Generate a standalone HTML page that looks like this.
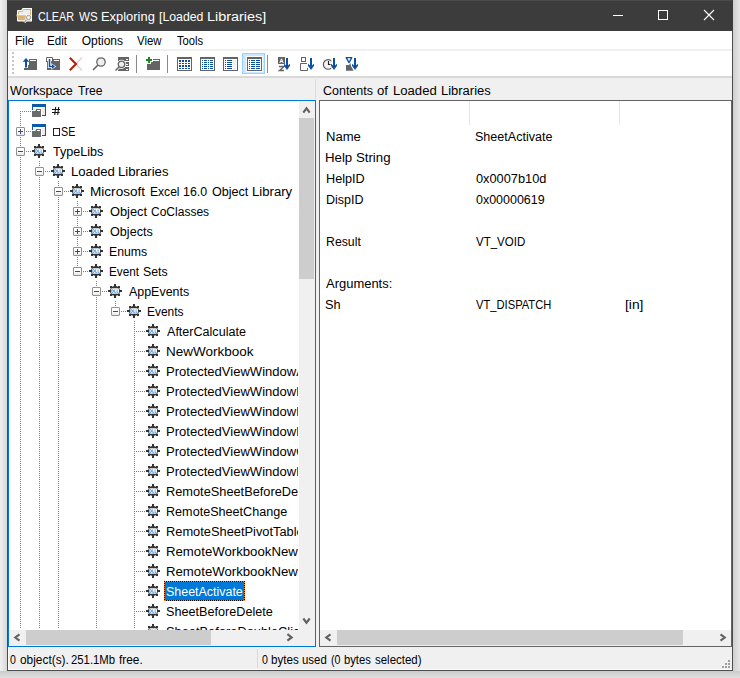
<!DOCTYPE html>
<html><head><meta charset="utf-8"><style>
html,body{margin:0;padding:0;}
body{width:740px;height:678px;overflow:hidden;position:relative;background:#ececec;font-family:"Liberation Sans", sans-serif;}
.r{position:absolute;}
.t{position:absolute;white-space:nowrap;font-size:12px;line-height:20px;transform-origin:0 0;}
.shadowL{position:absolute;left:0;top:0;width:7px;height:678px;background:linear-gradient(to right,#f1f1f1,#d8d8d8);}
.shadowR{position:absolute;left:733px;top:0;width:7px;height:678px;background:linear-gradient(to right,#cfcfcf,#e6e6e6);}
.shadowB{position:absolute;left:0;top:671px;width:740px;height:7px;background:linear-gradient(to bottom,#cbcbcb,#e0e0e0);}
</style></head><body>
<div class="shadowL"></div><div class="shadowR"></div><div class="shadowB"></div>
<svg width="0" height="0" style="position:absolute">
<defs>
<symbol id="gear" viewBox="0 0 16 16">
 <g fill="#333">
  <circle cx="8" cy="8" r="5"/>
  <rect x="7" y="1" width="2" height="3"/><rect x="7" y="12" width="2" height="3"/>
  <rect x="1" y="7" width="3" height="2"/><rect x="12" y="7" width="3" height="2"/>
  <rect x="3" y="3" width="2.2" height="2.2"/><rect x="10.8" y="3" width="2.2" height="2.2"/>
  <rect x="3" y="10.8" width="2.2" height="2.2"/><rect x="10.8" y="10.8" width="2.2" height="2.2"/>
 </g>
 <rect x="4" y="5.2" width="8" height="5.6" rx="1.4" fill="#fff"/>
 <path d="M4.8 6.4 V9.7 M4.8 6.4 Q6.7 6.7 6.7 8.05 Q6.7 9.4 4.8 9.7 M7.7 6.4 V9.7 H9.2 M10.1 6.4 V9.7 H11.6" stroke="#5a9ad8" stroke-width="0.9" fill="none"/>
</symbol>
<symbol id="win" viewBox="0 0 16 16">
 <rect x="1" y="1" width="14" height="12" fill="#0b5aa8"/>
 <rect x="2" y="4" width="12" height="8" fill="#ececec"/>
 <rect x="2" y="4" width="12" height="1" fill="#fff"/>
 <path d="M0 7 H4 V5 H11 V15 H0 Z" fill="#fff"/>
 <path d="M1 8 H4.5 L5 6 H10 V14 H1 Z" fill="#6b6b6b"/>
 <rect x="6" y="7" width="3" height="1" fill="#fff"/>
</symbol>
</defs></svg>
<div class="r" style="left:7px;top:0px;width:726px;height:31px;background:#3c3c3c;"></div><div class="r" style="left:8px;top:0px;width:724px;height:1px;background:#4a4a4a;"></div><svg class="r" style="left:16px;top:8px" width="16" height="16" viewBox="0 0 16 16">
<path d="M2 12.5 V3 H6 L7 1 H15.5 V12.5 Z" fill="#fff" stroke="#fff" stroke-width="2" stroke-linejoin="round"/>
<path d="M2.5 12 V3.5 H6.3 L7.3 1.5 H14.5 V12 Z" fill="#ececf2" stroke="#d9b46f" stroke-width="1"/>
<path d="M0.5 6.5 H10.5 V12.5 H1.5 Z" fill="#fff"/>
<path d="M1.3 7.3 H10 V12 H2.2 Z" fill="#dab370"/>
<path d="M11 11 L8.3 14.2" stroke="#fff" stroke-width="2.6"/>
<path d="M11 11 L8.5 14" stroke="#9a9a9a" stroke-width="1.2"/>
<circle cx="12.6" cy="9.5" r="3" fill="#fff"/>
<circle cx="12.6" cy="9.5" r="2.1" fill="#f4f4f4" stroke="#8a8a8a" stroke-width="0.9"/>
</svg><div class="t" style="left:37.60px;top:7px;transform:scaleX(0.9000);color:#fff">CLEAR</div><div class="t" style="left:78.50px;top:7px;transform:scaleX(0.9632);color:#fff">WS</div><div class="t" style="left:100.62px;top:7px;transform:scaleX(1.0755);color:#fff">Exploring</div><div class="t" style="left:159.48px;top:7px;transform:scaleX(1.0238);color:#fff">[Loaded</div><div class="t" style="left:207.20px;top:7px;transform:scaleX(1.2000);color:#fff">Libraries]</div><div class="r" style="left:613px;top:15px;width:10px;height:1px;background:#fff;"></div><div class="r" style="left:658px;top:10px;width:10px;height:10px;background:transparent;border:1px solid #fff;box-sizing:border-box;width:10px;height:10px"></div><svg class="r" style="left:703px;top:9px" width="13" height="13" viewBox="0 0 13 13"><path d="M1 1 L11 11 M11 1 L1 11" stroke="#fff" stroke-width="1.1"/></svg><div class="r" style="left:8px;top:31px;width:724px;height:639px;background:#f0f0f0;"></div><div class="r" style="left:7px;top:31px;width:1px;height:640px;background:#4d4d4d;"></div><div class="r" style="left:732px;top:31px;width:1px;height:640px;background:#4d4d4d;"></div><div class="r" style="left:7px;top:670px;width:726px;height:1px;background:#4d4d4d;"></div><div class="r" style="left:8px;top:31px;width:724px;height:18px;background:#fff;"></div><div class="r" style="left:8px;top:49px;width:724px;height:2px;background:#f0f0f0;"></div><div class="t" style="left:14.51px;top:31px;transform:scaleX(0.9889);color:#000;">File</div><div class="t" style="left:46.63px;top:31px;transform:scaleX(0.9650);color:#000;">Edit</div><div class="t" style="left:81.70px;top:31px;transform:scaleX(1.0000);color:#000;">Options</div><div class="t" style="left:137.30px;top:31px;transform:scaleX(0.9500);color:#000;">View</div><div class="t" style="left:176.90px;top:31px;transform:scaleX(0.9321);color:#000;">Tools</div><div class="r" style="left:8px;top:51px;width:724px;height:25px;background:#fff;"></div><div class="r" style="left:8px;top:76px;width:724px;height:2px;background:#d9d9d9;"></div><div class="r" style="left:12px;top:52px;width:2px;height:2px;background:#c6c6c6;"></div><div class="r" style="left:12px;top:56px;width:2px;height:2px;background:#c6c6c6;"></div><div class="r" style="left:12px;top:60px;width:2px;height:2px;background:#c6c6c6;"></div><div class="r" style="left:12px;top:64px;width:2px;height:2px;background:#c6c6c6;"></div><div class="r" style="left:12px;top:68px;width:2px;height:2px;background:#c6c6c6;"></div><div class="r" style="left:12px;top:72px;width:2px;height:2px;background:#c6c6c6;"></div><div class="r" style="left:136px;top:55px;width:1px;height:18px;background:#8a8a8a;"></div><div class="r" style="left:167px;top:55px;width:1px;height:18px;background:#8a8a8a;"></div><div class="r" style="left:267px;top:55px;width:1px;height:18px;background:#8a8a8a;"></div><div class="r" style="left:242px;top:53px;width:23px;height:21px;background:#cce8ff;border:1px solid #99d1ff;box-sizing:border-box"></div>
<svg class="r" style="left:0;top:0" width="740" height="80" viewBox="0 0 740 80">
<!-- icon1 up folder -->
<path d="M29 59 H37 V70 H24 V68 H28 V65 H29 Z" fill="#646464"/>
<rect x="30" y="60" width="6" height="1" fill="#fff"/>
<path d="M25 58 V67.5 H27 V61.8 H29.3 L26 58 L22.7 61.8 H25" fill="#0b50a5"/>
<!-- icon2 link folder -->
<path d="M53 59 H60 V70 H47 V62 H53 Z" fill="#646464"/>
<rect x="54" y="60" width="5" height="1" fill="#fff"/>
<rect x="46" y="57" width="7" height="5" fill="#fff"/>
<path d="M46.5 62 V57.5 H52.5 V62" stroke="#646464" stroke-width="1" fill="none"/>
<path d="M46 61.5 H48 M51 61.5 H53" stroke="#646464" stroke-width="1"/>
<path d="M49.5 59 V66.5 H53.5" stroke="#fff" stroke-width="3.2" fill="none"/>
<path d="M51.3 63.2 L56.2 66.5 L51.3 69.8 Z" fill="#fff"/>
<path d="M49.5 59 V66.5 H52.5" stroke="#0b50a5" stroke-width="1.5" fill="none"/>
<path d="M52 64.3 L55 66.5 L52 68.7 Z" fill="#0b50a5"/>
<!-- red X -->
<path d="M76 64 L82 57.5 M76 64 L82 70.5" stroke="#f2cfc9" stroke-width="1.4"/>
<path d="M69.8 57.8 L76 64 L69.8 70.2" stroke="#b01e08" stroke-width="2" fill="none"/>
<!-- magnifier -->
<circle cx="101" cy="62" r="4.2" fill="#eeeeee" stroke="#646464" stroke-width="1.3"/>
<path d="M98 65 L93 70" stroke="#646464" stroke-width="1.6"/>
<!-- server magnifier -->
<rect x="118" y="57" width="11" height="4" fill="#646464"/>
<rect x="118" y="62" width="11" height="4" fill="#646464"/>
<rect x="118" y="67" width="11" height="4" fill="#646464"/>
<path d="M126 59.5 H128 M126 64.5 H128 M126 69.5 H128" stroke="#fff" stroke-width="1"/>
<circle cx="121.5" cy="64.3" r="4.6" fill="#fff"/>
<path d="M119 67 L115.5 70.5" stroke="#fff" stroke-width="3"/>
<circle cx="121.5" cy="64.3" r="3.2" fill="#eeeeee" stroke="#646464" stroke-width="1.3"/>
<path d="M119.2 66.8 L115.5 70.5" stroke="#646464" stroke-width="1.5"/>
<!-- new folder -->
<path d="M147 64 H151 V62 H153 V59 H160 V70 H147 Z" fill="#646464"/>
<rect x="153" y="60" width="6" height="1" fill="#fff"/>
<path d="M149 56 V64 M145 60 H153" stroke="#fff" stroke-width="3.2"/>
<path d="M149 57 V63 M146 60 H152" stroke="#1a861a" stroke-width="2"/>
<!-- checked white inner -->
<rect x="246" y="56" width="17" height="16" fill="#fff"/>
<rect x="177.5" y="57.5" width="14" height="13" fill="#fff" stroke="#646464" stroke-width="1"/><rect x="177" y="57" width="15" height="2" fill="#646464"/><rect x="179" y="60" width="2" height="2" fill="#0a50a0"/><rect x="179" y="63" width="2" height="1" fill="#0a50a0"/><rect x="179" y="65" width="2" height="2" fill="#0a50a0"/><rect x="179" y="68" width="2" height="1" fill="#0a50a0"/><rect x="182" y="60" width="2" height="2" fill="#0a50a0"/><rect x="182" y="63" width="2" height="1" fill="#0a50a0"/><rect x="182" y="65" width="2" height="2" fill="#0a50a0"/><rect x="182" y="68" width="2" height="1" fill="#0a50a0"/><rect x="185" y="60" width="2" height="2" fill="#0a50a0"/><rect x="185" y="63" width="2" height="1" fill="#0a50a0"/><rect x="185" y="65" width="2" height="2" fill="#0a50a0"/><rect x="185" y="68" width="2" height="1" fill="#0a50a0"/><rect x="188" y="60" width="2" height="2" fill="#0a50a0"/><rect x="188" y="63" width="2" height="1" fill="#0a50a0"/><rect x="188" y="65" width="2" height="2" fill="#0a50a0"/><rect x="188" y="68" width="2" height="1" fill="#0a50a0"/><rect x="200.5" y="57.5" width="14" height="13" fill="#fff" stroke="#646464" stroke-width="1"/><rect x="200" y="57" width="15" height="2" fill="#646464"/><rect x="202" y="60" width="1" height="1" fill="#0a50a0"/><rect x="204" y="60" width="3" height="1" fill="#0a50a0"/><rect x="208" y="60" width="1" height="1" fill="#0a50a0"/><rect x="210" y="60" width="3" height="1" fill="#0a50a0"/><rect x="202" y="62" width="1" height="1" fill="#0a50a0"/><rect x="204" y="62" width="3" height="1" fill="#0a50a0"/><rect x="208" y="62" width="1" height="1" fill="#0a50a0"/><rect x="210" y="62" width="3" height="1" fill="#0a50a0"/><rect x="202" y="64" width="1" height="1" fill="#0a50a0"/><rect x="204" y="64" width="3" height="1" fill="#0a50a0"/><rect x="208" y="64" width="1" height="1" fill="#0a50a0"/><rect x="210" y="64" width="3" height="1" fill="#0a50a0"/><rect x="202" y="66" width="1" height="1" fill="#0a50a0"/><rect x="204" y="66" width="3" height="1" fill="#0a50a0"/><rect x="208" y="66" width="1" height="1" fill="#0a50a0"/><rect x="210" y="66" width="3" height="1" fill="#0a50a0"/><rect x="202" y="68" width="1" height="1" fill="#0a50a0"/><rect x="204" y="68" width="3" height="1" fill="#0a50a0"/><rect x="208" y="68" width="1" height="1" fill="#0a50a0"/><rect x="210" y="68" width="3" height="1" fill="#0a50a0"/><rect x="223.5" y="57.5" width="14" height="13" fill="#fff" stroke="#646464" stroke-width="1"/><rect x="223" y="57" width="15" height="2" fill="#646464"/><rect x="233" y="60" width="3" height="10" fill="#f2f2f2"/><rect x="225" y="60" width="1" height="1" fill="#0a50a0"/><rect x="227" y="60" width="5" height="1" fill="#0a50a0"/><rect x="225" y="62" width="1" height="1" fill="#0a50a0"/><rect x="227" y="62" width="5" height="1" fill="#0a50a0"/><rect x="225" y="64" width="1" height="1" fill="#0a50a0"/><rect x="227" y="64" width="5" height="1" fill="#0a50a0"/><rect x="225" y="66" width="1" height="1" fill="#0a50a0"/><rect x="227" y="66" width="5" height="1" fill="#0a50a0"/><rect x="225" y="68" width="1" height="1" fill="#0a50a0"/><rect x="227" y="68" width="5" height="1" fill="#0a50a0"/><rect x="247.5" y="57.5" width="14" height="13" fill="#fff" stroke="#646464" stroke-width="1"/><rect x="247" y="57" width="15" height="2" fill="#646464"/><rect x="249" y="60" width="1" height="1" fill="#0a50a0"/><rect x="251" y="60" width="4" height="1" fill="#0a50a0"/><rect x="256" y="60" width="4" height="1" fill="#0a50a0"/><rect x="249" y="62" width="1" height="1" fill="#0a50a0"/><rect x="251" y="62" width="4" height="1" fill="#0a50a0"/><rect x="256" y="62" width="4" height="1" fill="#0a50a0"/><rect x="249" y="64" width="1" height="1" fill="#0a50a0"/><rect x="251" y="64" width="4" height="1" fill="#0a50a0"/><rect x="256" y="64" width="4" height="1" fill="#0a50a0"/><rect x="249" y="66" width="1" height="1" fill="#0a50a0"/><rect x="251" y="66" width="4" height="1" fill="#0a50a0"/><rect x="256" y="66" width="4" height="1" fill="#0a50a0"/><rect x="249" y="68" width="1" height="1" fill="#0a50a0"/><rect x="251" y="68" width="4" height="1" fill="#0a50a0"/><rect x="256" y="68" width="4" height="1" fill="#0a50a0"/>
<rect x="278" y="57" width="7" height="7" fill="#646464"/>
<path d="M279.8 63 L281.5 58.8 L283.2 63 M280.5 61.5 H282.5" stroke="#fff" stroke-width="1" fill="none"/>
<path d="M279 66.5 H284 L279.5 70.5 H284" stroke="#646464" stroke-width="1.4" fill="none"/>
<path d="M286 58 H288 V65.6 Q289.2 64.6 290 63.8 V65.8 L287 70 L284 65.8 V63.8 Q284.8 64.6 286 65.6 Z" fill="#0b50a5"/>
<rect x="301.5" y="57.5" width="4" height="4" fill="none" stroke="#646464" stroke-width="1"/>
<path d="M307 63.5 H300.5 V70.5 H307.5 V68" fill="none" stroke="#646464" stroke-width="1"/>
<path d="M310 58 H312 V65.6 Q313.2 64.6 314 63.8 V65.8 L311 70 L308 65.8 V63.8 Q308.8 64.6 310 65.6 Z" fill="#0b50a5"/>
<circle cx="328.2" cy="64.4" r="4.8" fill="#f2f2f2" stroke="#555" stroke-width="1.1"/>
<rect x="331.3" y="58" width="3" height="13" fill="#fff"/>
<path d="M328.5 61 V64.5 H330.5" stroke="#222" stroke-width="1.1" fill="none"/>
<path d="M333 58 H335 V65.6 Q336.2 64.6 337 63.8 V65.8 L334 70 L331 65.8 V63.8 Q331.8 64.6 333 65.6 Z" fill="#0b50a5"/>
<path d="M346.2 57.6 H351.8 L349 62.6 Z" fill="#fff" stroke="#0b50a5" stroke-width="1.3" stroke-linejoin="round"/>
<path d="M346 65 H349 L350.5 63 L351 66 L353.5 70.8 H346 Z" fill="#646464"/>
<path d="M354 58 H356 V65.6 Q357.2 64.6 358 63.8 V65.8 L355 70 L352 65.8 V63.8 Q352.8 64.6 354 65.6 Z" fill="#0b50a5"/>
</svg><div class="r" style="left:8px;top:78px;width:724px;height:22px;background:#f0f0f0;"></div><div class="r" style="left:315px;top:79px;width:1px;height:20px;background:#dcdcdc;"></div><div class="t" style="left:10.40px;top:81px;transform:scaleX(1.0517);color:#000">Workspace</div><div class="t" style="left:78.30px;top:81px;transform:scaleX(1.0125);color:#000">Tree</div><div class="t" style="left:322.70px;top:81px;transform:scaleX(1.0396);color:#000">Contents</div><div class="t" style="left:377.20px;top:81px;transform:scaleX(1.1000);color:#000">of</div><div class="t" style="left:392.81px;top:81px;transform:scaleX(1.0923);color:#000">Loaded</div><div class="t" style="left:440.62px;top:81px;transform:scaleX(1.0800);color:#000">Libraries</div><div class="r" style="left:8px;top:100px;width:308px;height:547px;background:#0078d7;"></div><div class="r" style="left:9px;top:101px;width:306px;height:545px;background:#fff;"></div><div class="r" style="left:9px;top:101px;width:289px;height:529px;overflow:hidden"><div class="r" style="left:11px;top:10px;width:1px;height:517px;background:repeating-linear-gradient(to bottom,#808080 0 1px,transparent 1px 2px);"></div><div class="r" style="left:30px;top:60px;width:1px;height:467px;background:repeating-linear-gradient(to bottom,#808080 0 1px,transparent 1px 2px);"></div><div class="r" style="left:49px;top:80px;width:1px;height:447px;background:repeating-linear-gradient(to bottom,#808080 0 1px,transparent 1px 2px);"></div><div class="r" style="left:68px;top:100px;width:1px;height:71px;background:repeating-linear-gradient(to bottom,#808080 0 1px,transparent 1px 2px);"></div><div class="r" style="left:87px;top:180px;width:1px;height:347px;background:repeating-linear-gradient(to bottom,#808080 0 1px,transparent 1px 2px);"></div><div class="r" style="left:106px;top:200px;width:1px;height:11px;background:repeating-linear-gradient(to bottom,#808080 0 1px,transparent 1px 2px);"></div><div class="r" style="left:125px;top:220px;width:1px;height:307px;background:repeating-linear-gradient(to bottom,#808080 0 1px,transparent 1px 2px);"></div><div class="r" style="left:11px;top:10px;width:11px;height:1px;background:repeating-linear-gradient(to right,#808080 0 1px,transparent 1px 2px);"></div><svg class="r" style="left:22px;top:2px" width="16" height="16"><use href="#win"/></svg><svg class="r" style="left:41px;top:4px" width="12" height="12"><path d="M5.7 2 L4.7 10 M8.7 2 L7.7 10 M2 4.5 H10 M2 7.5 H9.6" stroke="#111" stroke-width="1.05" fill="none"/></svg><div class="r" style="left:11px;top:30px;width:11px;height:1px;background:repeating-linear-gradient(to right,#808080 0 1px,transparent 1px 2px);"></div><div class="r" style="left:7px;top:26px;width:9px;height:9px;background:linear-gradient(#fff 0,#fff 50%,#e6e6e6 100%);border:1px solid #919191;box-sizing:border-box;border-radius:1px"></div><div class="r" style="left:9px;top:30px;width:5px;height:1px;background:#2b4a9a;"></div><div class="r" style="left:11px;top:28px;width:1px;height:5px;background:#2b4a9a;"></div><svg class="r" style="left:22px;top:22px" width="16" height="16"><use href="#win"/></svg><svg class="r" style="left:43px;top:26px" width="9" height="10"><rect x="1.5" y="1.5" width="6" height="7" fill="none" stroke="#222" stroke-width="1"/></svg><div class="t" style="left:51.61px;top:21px;transform:scaleX(0.8933)">SE</div><div class="r" style="left:11px;top:50px;width:11px;height:1px;background:repeating-linear-gradient(to right,#808080 0 1px,transparent 1px 2px);"></div><div class="r" style="left:7px;top:46px;width:9px;height:9px;background:linear-gradient(#fff 0,#fff 50%,#e6e6e6 100%);border:1px solid #919191;box-sizing:border-box;border-radius:1px"></div><div class="r" style="left:9px;top:50px;width:5px;height:1px;background:#2b4a9a;"></div><svg class="r" style="left:22px;top:42px" width="16" height="16"><use href="#gear"/></svg><div class="t" style="left:44.10px;top:41px;transform:scaleX(1.0479);color:#000">TypeLibs</div><div class="r" style="left:30px;top:70px;width:11px;height:1px;background:repeating-linear-gradient(to right,#808080 0 1px,transparent 1px 2px);"></div><div class="r" style="left:26px;top:66px;width:9px;height:9px;background:linear-gradient(#fff 0,#fff 50%,#e6e6e6 100%);border:1px solid #919191;box-sizing:border-box;border-radius:1px"></div><div class="r" style="left:28px;top:70px;width:5px;height:1px;background:#2b4a9a;"></div><svg class="r" style="left:41px;top:62px" width="16" height="16"><use href="#gear"/></svg><div class="t" style="left:61.51px;top:61px;transform:scaleX(1.0949);color:#000">Loaded</div><div class="t" style="left:109.10px;top:61px;transform:scaleX(1.0978);color:#000">Libraries</div><div class="r" style="left:49px;top:90px;width:11px;height:1px;background:repeating-linear-gradient(to right,#808080 0 1px,transparent 1px 2px);"></div><div class="r" style="left:45px;top:86px;width:9px;height:9px;background:linear-gradient(#fff 0,#fff 50%,#e6e6e6 100%);border:1px solid #919191;box-sizing:border-box;border-radius:1px"></div><div class="r" style="left:47px;top:90px;width:5px;height:1px;background:#2b4a9a;"></div><svg class="r" style="left:60px;top:82px" width="16" height="16"><use href="#gear"/></svg><div class="t" style="left:81.07px;top:81px;transform:scaleX(1.1312);color:#000">Microsoft</div><div class="t" style="left:140.69px;top:81px;transform:scaleX(1.0071);color:#000">Excel</div><div class="t" style="left:174.07px;top:81px;transform:scaleX(1.0318);color:#000">16.0</div><div class="t" style="left:202.60px;top:81px;transform:scaleX(1.0486);color:#000">Object</div><div class="t" style="left:243.11px;top:81px;transform:scaleX(1.0944);color:#000">Library</div><div class="r" style="left:68px;top:110px;width:11px;height:1px;background:repeating-linear-gradient(to right,#808080 0 1px,transparent 1px 2px);"></div><div class="r" style="left:64px;top:106px;width:9px;height:9px;background:linear-gradient(#fff 0,#fff 50%,#e6e6e6 100%);border:1px solid #919191;box-sizing:border-box;border-radius:1px"></div><div class="r" style="left:66px;top:110px;width:5px;height:1px;background:#2b4a9a;"></div><div class="r" style="left:68px;top:108px;width:1px;height:5px;background:#2b4a9a;"></div><svg class="r" style="left:79px;top:102px" width="16" height="16"><use href="#gear"/></svg><div class="t" style="left:100.80px;top:101px;transform:scaleX(1.0686);color:#000">Object</div><div class="t" style="left:142.00px;top:101px;transform:scaleX(1.0017);color:#000">CoClasses</div><div class="r" style="left:68px;top:130px;width:11px;height:1px;background:repeating-linear-gradient(to right,#808080 0 1px,transparent 1px 2px);"></div><div class="r" style="left:64px;top:126px;width:9px;height:9px;background:linear-gradient(#fff 0,#fff 50%,#e6e6e6 100%);border:1px solid #919191;box-sizing:border-box;border-radius:1px"></div><div class="r" style="left:66px;top:130px;width:5px;height:1px;background:#2b4a9a;"></div><div class="r" style="left:68px;top:128px;width:1px;height:5px;background:#2b4a9a;"></div><svg class="r" style="left:79px;top:122px" width="16" height="16"><use href="#gear"/></svg><div class="t" style="left:101.10px;top:121px;transform:scaleX(1.0512);color:#000">Objects</div><div class="r" style="left:68px;top:150px;width:11px;height:1px;background:repeating-linear-gradient(to right,#808080 0 1px,transparent 1px 2px);"></div><div class="r" style="left:64px;top:146px;width:9px;height:9px;background:linear-gradient(#fff 0,#fff 50%,#e6e6e6 100%);border:1px solid #919191;box-sizing:border-box;border-radius:1px"></div><div class="r" style="left:66px;top:150px;width:5px;height:1px;background:#2b4a9a;"></div><div class="r" style="left:68px;top:148px;width:1px;height:5px;background:#2b4a9a;"></div><svg class="r" style="left:79px;top:142px" width="16" height="16"><use href="#gear"/></svg><div class="t" style="left:100.08px;top:141px;transform:scaleX(1.0222);color:#000">Enums</div><div class="r" style="left:68px;top:170px;width:11px;height:1px;background:repeating-linear-gradient(to right,#808080 0 1px,transparent 1px 2px);"></div><div class="r" style="left:64px;top:166px;width:9px;height:9px;background:linear-gradient(#fff 0,#fff 50%,#e6e6e6 100%);border:1px solid #919191;box-sizing:border-box;border-radius:1px"></div><div class="r" style="left:66px;top:170px;width:5px;height:1px;background:#2b4a9a;"></div><svg class="r" style="left:79px;top:162px" width="16" height="16"><use href="#gear"/></svg><div class="t" style="left:99.72px;top:161px;transform:scaleX(0.9800);color:#000">Event</div><div class="t" style="left:133.77px;top:161px;transform:scaleX(1.0261);color:#000">Sets</div><div class="r" style="left:87px;top:190px;width:11px;height:1px;background:repeating-linear-gradient(to right,#808080 0 1px,transparent 1px 2px);"></div><div class="r" style="left:83px;top:186px;width:9px;height:9px;background:linear-gradient(#fff 0,#fff 50%,#e6e6e6 100%);border:1px solid #919191;box-sizing:border-box;border-radius:1px"></div><div class="r" style="left:85px;top:190px;width:5px;height:1px;background:#2b4a9a;"></div><svg class="r" style="left:98px;top:182px" width="16" height="16"><use href="#gear"/></svg><div class="t" style="left:120.10px;top:181px;transform:scaleX(1.0362);color:#000">AppEvents</div><div class="r" style="left:106px;top:210px;width:11px;height:1px;background:repeating-linear-gradient(to right,#808080 0 1px,transparent 1px 2px);"></div><div class="r" style="left:102px;top:206px;width:9px;height:9px;background:linear-gradient(#fff 0,#fff 50%,#e6e6e6 100%);border:1px solid #919191;box-sizing:border-box;border-radius:1px"></div><div class="r" style="left:104px;top:210px;width:5px;height:1px;background:#2b4a9a;"></div><svg class="r" style="left:117px;top:202px" width="16" height="16"><use href="#gear"/></svg><div class="t" style="left:138.10px;top:201px;transform:scaleX(0.9972);color:#000">Events</div><div class="r" style="left:125px;top:230px;width:11px;height:1px;background:repeating-linear-gradient(to right,#808080 0 1px,transparent 1px 2px);"></div><svg class="r" style="left:136px;top:222px" width="16" height="16"><use href="#gear"/></svg><div class="t" style="left:158.10px;top:221px;transform:scaleX(1.0467);color:#000">AfterCalculate</div><div class="r" style="left:125px;top:250px;width:11px;height:1px;background:repeating-linear-gradient(to right,#808080 0 1px,transparent 1px 2px);"></div><svg class="r" style="left:136px;top:242px" width="16" height="16"><use href="#gear"/></svg><div class="t" style="left:156.98px;top:241px;transform:scaleX(1.1247);color:#000">NewWorkbook</div><div class="r" style="left:125px;top:270px;width:11px;height:1px;background:repeating-linear-gradient(to right,#808080 0 1px,transparent 1px 2px);"></div><svg class="r" style="left:136px;top:262px" width="16" height="16"><use href="#gear"/></svg><div class="t" style="left:157.01px;top:261px;transform:scaleX(1.0870);color:#000">ProtectedViewWindowActivate</div><div class="r" style="left:125px;top:290px;width:11px;height:1px;background:repeating-linear-gradient(to right,#808080 0 1px,transparent 1px 2px);"></div><svg class="r" style="left:136px;top:282px" width="16" height="16"><use href="#gear"/></svg><div class="t" style="left:157.01px;top:281px;transform:scaleX(1.0870);color:#000">ProtectedViewWindowBeforeClose</div><div class="r" style="left:125px;top:310px;width:11px;height:1px;background:repeating-linear-gradient(to right,#808080 0 1px,transparent 1px 2px);"></div><svg class="r" style="left:136px;top:302px" width="16" height="16"><use href="#gear"/></svg><div class="t" style="left:157.01px;top:301px;transform:scaleX(1.0870);color:#000">ProtectedViewWindowBeforeEdit</div><div class="r" style="left:125px;top:330px;width:11px;height:1px;background:repeating-linear-gradient(to right,#808080 0 1px,transparent 1px 2px);"></div><svg class="r" style="left:136px;top:322px" width="16" height="16"><use href="#gear"/></svg><div class="t" style="left:157.01px;top:321px;transform:scaleX(1.0870);color:#000">ProtectedViewWindowDeactivate</div><div class="r" style="left:125px;top:350px;width:11px;height:1px;background:repeating-linear-gradient(to right,#808080 0 1px,transparent 1px 2px);"></div><svg class="r" style="left:136px;top:342px" width="16" height="16"><use href="#gear"/></svg><div class="t" style="left:157.01px;top:341px;transform:scaleX(1.0870);color:#000">ProtectedViewWindowOpen</div><div class="r" style="left:125px;top:370px;width:11px;height:1px;background:repeating-linear-gradient(to right,#808080 0 1px,transparent 1px 2px);"></div><svg class="r" style="left:136px;top:362px" width="16" height="16"><use href="#gear"/></svg><div class="t" style="left:157.01px;top:361px;transform:scaleX(1.0870);color:#000">ProtectedViewWindowResize</div><div class="r" style="left:125px;top:390px;width:11px;height:1px;background:repeating-linear-gradient(to right,#808080 0 1px,transparent 1px 2px);"></div><svg class="r" style="left:136px;top:382px" width="16" height="16"><use href="#gear"/></svg><div class="t" style="left:157.03px;top:381px;transform:scaleX(1.0650);color:#000">RemoteSheetBeforeDelete</div><div class="r" style="left:125px;top:410px;width:11px;height:1px;background:repeating-linear-gradient(to right,#808080 0 1px,transparent 1px 2px);"></div><svg class="r" style="left:136px;top:402px" width="16" height="16"><use href="#gear"/></svg><div class="t" style="left:157.05px;top:401px;transform:scaleX(1.0509);color:#000">RemoteSheetChange</div><div class="r" style="left:125px;top:430px;width:11px;height:1px;background:repeating-linear-gradient(to right,#808080 0 1px,transparent 1px 2px);"></div><svg class="r" style="left:136px;top:422px" width="16" height="16"><use href="#gear"/></svg><div class="t" style="left:157.03px;top:421px;transform:scaleX(1.0700);color:#000">RemoteSheetPivotTableUpdate</div><div class="r" style="left:125px;top:450px;width:11px;height:1px;background:repeating-linear-gradient(to right,#808080 0 1px,transparent 1px 2px);"></div><svg class="r" style="left:136px;top:442px" width="16" height="16"><use href="#gear"/></svg><div class="t" style="left:157.00px;top:441px;transform:scaleX(1.1000);color:#000">RemoteWorkbookNewChart</div><div class="r" style="left:125px;top:470px;width:11px;height:1px;background:repeating-linear-gradient(to right,#808080 0 1px,transparent 1px 2px);"></div><svg class="r" style="left:136px;top:462px" width="16" height="16"><use href="#gear"/></svg><div class="t" style="left:157.00px;top:461px;transform:scaleX(1.1000);color:#000">RemoteWorkbookNewSheet</div><div class="r" style="left:125px;top:490px;width:11px;height:1px;background:repeating-linear-gradient(to right,#808080 0 1px,transparent 1px 2px);"></div><svg class="r" style="left:136px;top:482px" width="16" height="16"><use href="#gear"/></svg><div class="r" style="left:155px;top:480px;width:81px;height:20px;background:#0078d7;"></div><div class="r" style="left:155px;top:480px;width:81px;height:1px;background:repeating-linear-gradient(to right,#000 0 1px,#ff8728 1px 2px);"></div><div class="r" style="left:155px;top:499px;width:81px;height:1px;background:repeating-linear-gradient(to right,#000 0 1px,#ff8728 1px 2px);"></div><div class="r" style="left:155px;top:480px;width:1px;height:20px;background:repeating-linear-gradient(to bottom,#000 0 1px,#ff8728 1px 2px);"></div><div class="r" style="left:235px;top:480px;width:1px;height:20px;background:repeating-linear-gradient(to bottom,#000 0 1px,#ff8728 1px 2px);"></div><div class="t" style="left:157.06px;top:481px;transform:scaleX(1.0370);color:#fff">SheetActivate</div><div class="r" style="left:125px;top:510px;width:11px;height:1px;background:repeating-linear-gradient(to right,#808080 0 1px,transparent 1px 2px);"></div><svg class="r" style="left:136px;top:502px" width="16" height="16"><use href="#gear"/></svg><div class="t" style="left:157.05px;top:501px;transform:scaleX(1.0540);color:#000">SheetBeforeDelete</div><div class="r" style="left:125px;top:530px;width:11px;height:1px;background:repeating-linear-gradient(to right,#808080 0 1px,transparent 1px 2px);"></div><svg class="r" style="left:136px;top:522px" width="16" height="16"><use href="#gear"/></svg><div class="t" style="left:157.03px;top:521px;transform:scaleX(1.0700);color:#000">SheetBeforeDoubleClick</div></div><div class="r" style="left:299px;top:101px;width:16px;height:529px;background:#f0f0f0;"></div><div class="r" style="left:299px;top:118px;width:15px;height:161px;background:#cdcdcd;"></div><div class="r" style="left:9px;top:630px;width:306px;height:16px;background:#f0f0f0;"></div><div class="r" style="left:26px;top:630px;width:185px;height:15px;background:#cdcdcd;"></div><div class="r" style="left:319px;top:100px;width:413px;height:547px;background:#646464;"></div><div class="r" style="left:320px;top:101px;width:411px;height:545px;background:#fff;"></div><div class="r" style="left:469px;top:101px;width:1px;height:24px;background:#e5e5e5;"></div><div class="r" style="left:619px;top:101px;width:1px;height:24px;background:#e5e5e5;"></div><div class="t" style="left:325.91px;top:127px;transform:scaleX(1.0903);color:#000;">Name</div><div class="t" style="left:325.40px;top:148px;transform:scaleX(1.1034);color:#000;">Help String</div><div class="t" style="left:325.74px;top:169px;transform:scaleX(1.0571);color:#000;">HelpID</div><div class="t" style="left:325.76px;top:190px;transform:scaleX(1.0400);color:#000;">DispID</div><div class="t" style="left:325.78px;top:232px;transform:scaleX(1.0242);color:#000;">Result</div><div class="t" style="left:326.10px;top:274px;transform:scaleX(1.0803);color:#000;">Arguments:</div><div class="t" style="left:325.04px;top:295px;transform:scaleX(1.0615);color:#000;">Sh</div><div class="t" style="left:475.05px;top:127px;transform:scaleX(1.0452);color:#000;">SheetActivate</div><div class="t" style="left:476.10px;top:169px;transform:scaleX(1.0652);color:#000;">0x0007b10d</div><div class="t" style="left:476.10px;top:190px;transform:scaleX(1.0394);color:#000;">0x00000619</div><div class="t" style="left:476.10px;top:232px;transform:scaleX(0.9588);color:#000;">VT_VOID</div><div class="t" style="left:476.40px;top:295px;transform:scaleX(0.9313);color:#000;">VT_DISPATCH</div><div class="t" style="left:624.85px;top:295px;transform:scaleX(1.1533);color:#000;">[in]</div><div class="r" style="left:320px;top:630px;width:411px;height:16px;background:#f0f0f0;"></div><div class="r" style="left:337px;top:630px;width:346px;height:15px;background:#cdcdcd;"></div><svg class="r" style="left:0;top:0" width="740" height="678"><path d="M303.30 112.60 L306.50 108.35 L309.70 112.60" stroke="#606060" stroke-width="2.1" fill="none" stroke-linejoin="miter" stroke-miterlimit="10"/><path d="M303.30 618.50 L306.50 622.75 L309.70 618.50" stroke="#606060" stroke-width="2.1" fill="none" stroke-linejoin="miter" stroke-miterlimit="10"/><path d="M19.50 634.30 L15.25 637.50 L19.50 640.70" stroke="#606060" stroke-width="2.1" fill="none" stroke-linejoin="miter" stroke-miterlimit="10"/><path d="M287.40 634.20 L291.65 637.40 L287.40 640.60" stroke="#606060" stroke-width="2.1" fill="none" stroke-linejoin="miter" stroke-miterlimit="10"/><path d="M330.50 634.30 L326.25 637.50 L330.50 640.70" stroke="#606060" stroke-width="2.1" fill="none" stroke-linejoin="miter" stroke-miterlimit="10"/><path d="M720.50 634.30 L724.75 637.50 L720.50 640.70" stroke="#606060" stroke-width="2.1" fill="none" stroke-linejoin="miter" stroke-miterlimit="10"/></svg><div class="r" style="left:8px;top:647px;width:724px;height:23px;background:#f0f0f0;"></div><div class="r" style="left:257px;top:649px;width:1px;height:19px;background:#d9d9d9;"></div><div class="r" style="left:8px;top:669px;width:724px;height:1px;background:#fbfbfb;"></div><div class="r" style="left:8px;top:647px;width:1px;height:23px;background:#fbfbfb;"></div><div class="t" style="left:10.30px;top:650px;transform:scaleX(0.8857);color:#000">0</div><div class="t" style="left:19.70px;top:650px;transform:scaleX(0.9898);color:#000">object(s).</div><div class="t" style="left:71.40px;top:650px;transform:scaleX(0.9447);color:#000">251.1Mb</div><div class="t" style="left:118.70px;top:650px;transform:scaleX(0.9870);color:#000">free.</div><div class="t" style="left:262.10px;top:650px;transform:scaleX(0.8857);color:#000">0</div><div class="t" style="left:271.30px;top:650px;transform:scaleX(0.9690);color:#000">bytes</div><div class="t" style="left:302.30px;top:650px;transform:scaleX(0.9500);color:#000">used</div><div class="t" style="left:331.00px;top:650px;transform:scaleX(0.8818);color:#000">(0</div><div class="t" style="left:343.50px;top:650px;transform:scaleX(0.9345);color:#000">bytes</div><div class="t" style="left:374.70px;top:650px;transform:scaleX(0.9563);color:#000">selected)</div><div class="r" style="left:728px;top:660px;width:2px;height:2px;background:#a0a0a0;"></div><div class="r" style="left:725px;top:663px;width:2px;height:2px;background:#a0a0a0;"></div><div class="r" style="left:728px;top:663px;width:2px;height:2px;background:#a0a0a0;"></div><div class="r" style="left:722px;top:666px;width:2px;height:2px;background:#a0a0a0;"></div><div class="r" style="left:725px;top:666px;width:2px;height:2px;background:#a0a0a0;"></div><div class="r" style="left:728px;top:666px;width:2px;height:2px;background:#a0a0a0;"></div>
</body></html>
